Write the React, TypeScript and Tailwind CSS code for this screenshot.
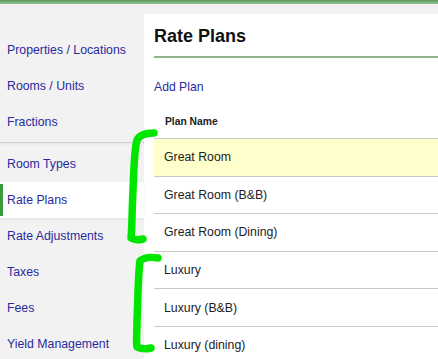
const navTop = ['Properties / Locations', 'Rooms / Units', 'Fractions'];
const navBottom = ['Room Types', 'Rate Plans', 'Rate Adjustments', 'Taxes', 'Fees', 'Yield Management'];
const plans = ['Great Room', 'Great Room (B&B)', 'Great Room (Dining)', 'Luxury', 'Luxury (B&B)', 'Luxury (dining)'];

const NavItem = ({ label, active }: { label: string; active?: boolean }) => (
  <div
    className={
      'relative flex h-[36px] items-center pl-[7px] ' + (active ? 'bg-white shadow-[0_1px_2px_rgba(0,0,0,0.08)]' : '')
    }
  >
    {active && <div className="absolute inset-y-[2px] left-0 w-[3px] bg-[#3c9a3c]" />}
    <a className="block text-[12.3px] leading-[14px] text-[#2a2a9e]">{label}</a>
  </div>
);

export default function App() {
  return (
    <div className="relative h-[359px] w-full overflow-hidden bg-[#f2f2f2] font-['Liberation_Sans',Arial,sans-serif]">
      {/* top green bar */}
      <div className="h-[4px] bg-gradient-to-b from-[#5d9b5d] to-[#8fc28f]" />
      <div className="h-[4px] bg-[#f4eff4]" />

      <div className="flex pt-[6px]">
        {/* sidebar */}
        <aside className="w-[144px] shrink-0 pt-[18px]">
          {navTop.map((n) => (
            <NavItem key={n} label={n} />
          ))}
          <div className="mt-[2px] h-px bg-[#cfcfcf]" />
          <div className="h-[3px] bg-gradient-to-b from-[#e8e8e8] to-[#f2f2f2]" />
          {navBottom.map((n) => (
            <NavItem key={n} label={n} active={n === 'Rate Plans'} />
          ))}
        </aside>

        {/* content */}
        <main className="h-[400px] flex-1 bg-white pl-[10px]">
          <div className="border-b-2 border-[#8fb486] pt-[11px] pb-[9px]">
            <h1 className="text-[18px] font-bold leading-[22px] text-[#111]">Rate Plans</h1>
          </div>
          <a className="mt-[22px] block text-[12.2px] leading-[14px] text-[#2a2a9e]">Add Plan</a>
          <div className="flex h-[44px] items-end pb-[10.5px] pl-[11px]">
            <span className="block text-[10.3px] font-bold leading-[13px] text-[#222]">Plan Name</span>
          </div>
          <div>
            {plans.map((p, i) => (
              <div
                key={p}
                className={
                  'flex h-[37.6px] items-center border-t border-[#c9c9c9] pl-[10px] ' +
                  (i === 0 ? 'bg-[#ffffcc]' : '')
                }
              >
                <span className="block text-[12.3px] leading-[14px] text-[#222]">{p}</span>
              </div>
            ))}
          </div>
        </main>
      </div>

      {/* hand-drawn annotation braces */}
      <svg className="pointer-events-none absolute left-0 top-0" width="438" height="359" viewBox="0 0 438 359">
        <path
          d="M154 133 C148 133 140 134 137 140 C134 150 134 170 133 190 C132 210 132 228 131 238 C134 240 139 240 143 239"
          fill="none"
          stroke="#00e600"
          strokeWidth="7.5"
          strokeLinecap="round"
          strokeLinejoin="round"
        />
        <path
          d="M158 258 C152 257 144 257 140 261 C138 275 138 300 137 320 C137 334 136 342 137 347 C141 349 147 349 151 348"
          fill="none"
          stroke="#00e600"
          strokeWidth="7.5"
          strokeLinecap="round"
          strokeLinejoin="round"
        />
      </svg>
    </div>
  );
}
